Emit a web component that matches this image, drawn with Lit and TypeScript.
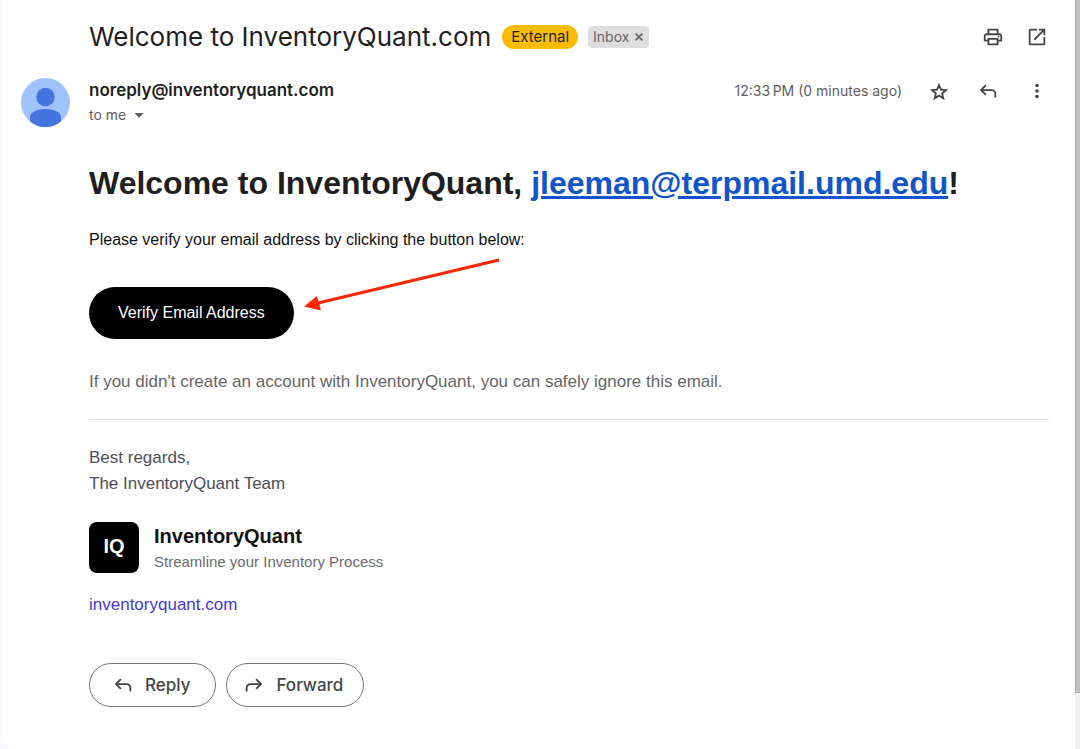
import { LitElement, html, css, svg } from "lit";
import { customElement, property } from "lit/decorators.js";

const paths: Record<string, unknown> = {
  print: svg`<path d="M16 8V5H8v3H6V3h12v5h-2zM18 12.5q.42 0 .71-.29.29-.29.29-.71t-.29-.71Q18.420 10.500 18 10.500t-.71.29q-.29.29-.29.710t.29.71q.29.29.71.29zM16 19v-4H8v4h8zm2 2H6v-4H2v-6q0-1.270.870-2.140Q3.730 8 5 8h14q1.270 0 2.140.86Q22 9.730 22 11v6h-4v4zm2-6v-4q0-.42-.29-.71Q19.420 10 19 10H5q-.42 0-.71.290Q4 10.580 4 11v4h2v-2h12v2h2z"/>`,
  open: svg`<path d="M5 21q-.83 0-1.410-.590Q3 19.830 3 19V5q0-.83.590-1.410Q4.170 3 5 3h7v2H5v14h14v-7h2v7q0 .83-.590 1.410Q19.830 21 19 21H5zm4.700-5.300l-1.400-1.400L17.600 5H14V3h7v7h-2V6.400l-9.300 9.300z"/>`,
  star: svg`<path d="M8.850 17.830 12 15.930l3.150 1.920-.83-3.600 2.780-2.400-3.650-.33L12 8.130l-1.450 3.400-3.650.320 2.780 2.420-.83 3.560zM5.830 22l1.630-7.030L2 10.240l7.190-.62L12 3l2.810 6.620 7.190.62-5.460 4.730L18.170 22 12 18.270 5.830 22z"/>`,
  reply: svg`<path d="M19 19v-4q0-1.250-.87-2.120Q17.250 12 16 12H6.830l3.580 3.600L9 17l-6-6 6-6 1.410 1.400L6.830 10H16q2.080 0 3.540 1.460Q21 12.920 21 15v4h-2z"/>`,
  forward: svg`<path d="M5 19v-4q0-1.250.87-2.120Q6.750 12 8 12h9.170l-3.580 3.600L15 17l6-6-6-6-1.410 1.400L17.170 10H8q-2.080 0-3.540 1.460Q3 12.920 3 15v4h2z"/>`,
  more: svg`<circle cx="12" cy="6" r="2"/><circle cx="12" cy="12" r="2"/><circle cx="12" cy="18" r="2"/>`,
  caret: svg`<path d="M5 9l7 7 7-7z"/>`,
  close: svg`<path d="M6.400 20 4 17.600 9.600 12 4 6.400 6.400 4l5.600 5.600L17.600 4 20 6.400 14.400 12l5.600 5.600-2.400 2.400-5.600-5.600z"/>`,
};

@customElement("mail-icon")
class MailIcon extends LitElement {
  @property() name = "";
  static styles = css`
    :host { display: block; width: 22px; height: 22px; flex: none; }
    .glyph { display: block; width: 100%; height: 100%; fill: currentColor; }
  `;
  render() {
    return html`<svg class="glyph" viewBox="0 0 24 24" aria-hidden="true">${paths[this.name]}</svg>`;
  }
}

@customElement("app-root")
class AppRoot extends LitElement {
  static styles = css`
    :host {
      display: flex;
      min-height: 100vh;
      background: #f6f8fc;
      color: #1f1f1f;
      font-family: "Liberation Sans", Arial, sans-serif;
    }
    * { box-sizing: border-box; }
    h1, h2, p { margin: 0; }
    button {
      border: 0;
      padding: 0;
      background: none;
      color: inherit;
      font: inherit;
      cursor: pointer;
    }
    .card {
      flex: 1;
      min-width: 0;
      margin-left: 1px;
      padding: 16px 26px 40px 20px;
      background: #fff;
      border-bottom-left-radius: 16px;
    }
    .track { width: 5px; display: flex; flex-direction: column; background: #f1f1f4; }
    .thumb { height: 92.5%; background: #c1c1c1; border-left: 1px solid #adadad; border-bottom: 1px solid #adadad; }
    .ui { font-family: Inter, Roboto, sans-serif; }
    .subject { display: flex; align-items: center; padding-left: 68px; min-height: 42px; }
    .title { font-size: 26px; line-height: 36px; font-weight: 400; }
    .external {
      margin-left: 11px;
      padding: 0 9px;
      border-radius: 12px;
      background: #fbbc04;
      font-size: 15px;
      line-height: 24px;
    }
    .inbox {
      display: flex;
      align-items: center;
      gap: 4px;
      margin-left: 10px;
      padding: 0 4px 0 5px;
      border-radius: 4px;
      background: #dddedd;
      color: #666;
      font-size: 14px;
      line-height: 22px;
    }
    .remove mail-icon { width: 12px; height: 12px; }
    .tools { display: flex; gap: 22px; margin-left: auto; padding-right: 1px; color: #444746; }
    .sender { display: flex; gap: 19px; margin-top: 20px; }
    .avatar { width: 49px; height: 49px; flex: none; }
    .who { display: flex; flex-direction: column; flex: 1; min-width: 0; }
    .from { display: flex; align-items: center; line-height: 25px; }
    .address { font-size: 17px; font-weight: 600; }
    .time { margin-left: auto; margin-right: 26px; font-size: 14px; color: #5e5e5e; }
    .actions { display: flex; gap: 27px; padding-right: 1px; color: #444746; }
    .to { display: flex; align-items: center; gap: 5px; font-size: 14px; line-height: 24px; color: #5e5e5e; }
    .to mail-icon { width: 16px; height: 16px; }
    .body { padding-left: 68px; }
    .headline { margin-top: 34px; font-size: 32px; line-height: 44px; font-weight: 700; }
    .mailto { color: #1155cc; }
    .lead { margin-top: 24px; font-size: 16px; line-height: 22px; color: #111; }
    .cta { position: relative; display: flex; margin-top: 36px; }
    .verify {
      padding: 0 29px;
      border-radius: 26px;
      background: #000;
      color: #fff;
      font-size: 16px;
      line-height: 52px;
    }
    .arrow { position: absolute; left: 215px; top: -29px; width: 196px; height: 54px; }
    .note { margin-top: 30px; font-size: 17px; line-height: 26px; color: #666; }
    .sign { margin-top: 24px; padding-top: 25px; border-top: 1px solid #e0e0e0; font-size: 17px; line-height: 26px; color: #4a4f57; }
    .brand { display: flex; align-items: flex-start; gap: 15px; margin-top: 25px; }
    .logo {
      width: 50px;
      height: 51px;
      border-radius: 8px;
      background: #000;
      color: #fff;
      font-size: 20px;
      line-height: 49px;
      font-weight: 700;
      text-align: center;
    }
    .name { font-size: 20px; line-height: 28px; font-weight: 700; color: #111; }
    .tag { font-size: 15px; line-height: 24px; color: #6b6b6b; }
    .site { display: inline-block; margin-top: 18px; font-size: 17px; line-height: 26px; color: #4338e0; text-decoration: none; }
    .replies { display: flex; gap: 10px; margin-top: 45px; color: #444746; }
    .pill {
      display: flex;
      align-items: center;
      gap: 11px;
      height: 44px;
      padding: 0 25px 0 22px;
      border: 1px solid #747775;
      border-radius: 22px;
      font-size: 17px;
      font-weight: 500;
    }
    .pill.forward { padding: 0 20px 0 16px; }
  `;

  render() {
    return html`
      <main class="card">
        <header class="subject ui">
          <h1 class="title">Welcome to InventoryQuant.com</h1>
          <span class="external">External</span>
          <span class="inbox">Inbox
            <button class="remove" aria-label="Remove label"><mail-icon name="close"></mail-icon></button>
          </span>
          <div class="tools">
            <button aria-label="Print"><mail-icon name="print"></mail-icon></button>
            <button aria-label="Open in new window"><mail-icon name="open"></mail-icon></button>
          </div>
        </header>
        <section class="sender ui">
          <svg class="avatar" viewBox="0 0 49 49" aria-hidden="true">
            <defs><clipPath id="disc"><circle cx="24.500" cy="24.500" r="24.500" /></clipPath></defs>
            <g clip-path="url(#disc)">
              <rect width="49" height="49" fill="#a0c3ff" />
              <circle cx="24.500" cy="19" r="9.200" fill="#4374e0" />
              <path d="M9 49V39.500C9 34 16 31 24.500 31S40 34 40 39.500V49z" fill="#4374e0" />
            </g>
          </svg>
          <div class="who">
            <div class="from">
              <span class="address">noreply@inventoryquant.com</span>
              <span class="time">12:33\u202fPM (0 minutes ago)</span>
              <div class="actions">
                <button aria-label="Star"><mail-icon name="star"></mail-icon></button>
                <button aria-label="Reply"><mail-icon name="reply"></mail-icon></button>
                <button aria-label="More"><mail-icon name="more"></mail-icon></button>
              </div>
            </div>
            <button class="to">to me <mail-icon name="caret"></mail-icon></button>
          </div>
        </section>
        <article class="body">
          <h2 class="headline">Welcome to InventoryQuant, <a class="mailto" href="mailto:jleeman@terpmail.umd.edu">jleeman@terpmail.umd.edu</a>!</h2>
          <p class="lead">Please verify your email address by clicking the button below:</p>
          <div class="cta">
            <button class="verify">Verify Email Address</button>
            <svg class="arrow" viewBox="0 0 196 54" aria-hidden="true">
              <path d="M14 45 195 2" fill="none" stroke="#ff2600" stroke-width="3" />
              <path d="M0 48.500 13 38 17 52.500z" fill="#ff2600" />
            </svg>
          </div>
          <p class="note">If you didn't create an account with InventoryQuant, you can safely ignore this email.</p>
          <div class="sign">
            <p>Best regards,<br />The InventoryQuant Team</p>
            <div class="brand">
              <div class="logo">IQ</div>
              <div>
                <p class="name">InventoryQuant</p>
                <p class="tag">Streamline your Inventory Process</p>
              </div>
            </div>
            <a class="site" href="https://inventoryquant.com">inventoryquant.com</a>
          </div>
          <div class="replies ui">
            <button class="pill"><mail-icon name="reply"></mail-icon>Reply</button>
            <button class="pill forward"><mail-icon name="forward"></mail-icon>Forward</button>
          </div>
        </article>
      </main>
      <div class="track"><div class="thumb"></div></div>
    `;
  }
}
